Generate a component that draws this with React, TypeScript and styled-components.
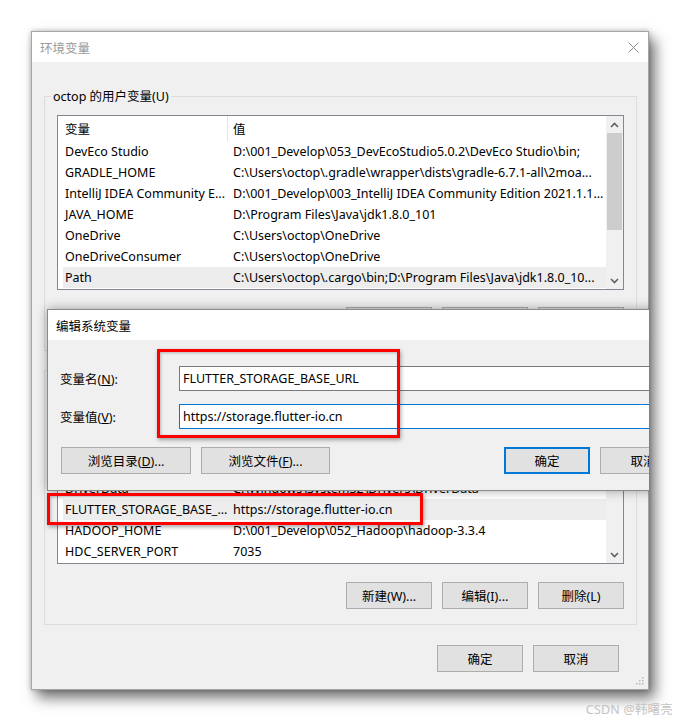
import React from "react";
import styled, { createGlobalStyle } from "styled-components";

const GlobalStyle = createGlobalStyle`
  body {
    margin: 0;
    background: #fff;
    font-family: "Noto Sans", "Noto Sans CJK SC", sans-serif;
    font-size: 12.5px;
    color: #000;
  }
`;

const Desktop = styled.div`
  position: relative;
  width: 681px;
  height: 722px;
  padding: 31px 0 0 31px;
  box-sizing: border-box;
  overflow: hidden;
`;

const Frame = styled.div`
  position: relative;
  width: 618px;
  height: 659px;
  overflow: hidden;
  box-shadow: 6px 8px 13px rgba(0, 0, 0, 0.55), 0 0 5px rgba(0, 0, 0, 0.25);
`;

const Window = styled.div`
  position: relative;
  height: 100%;
  box-sizing: border-box;
  border: 1px solid #a6a6a6;
  background: #f0f0f0;
  display: flex;
  flex-direction: column;
`;

const TitleBar = styled.div<{ $active?: boolean }>`
  flex: none;
  height: 30px;
  background: #fff;
  display: flex;
  align-items: center;
  justify-content: space-between;
  padding: 0 9px 0 8px;
  color: ${(p) => (p.$active ? "#000" : "#9a9a9a")};
`;

const Body = styled.div`
  display: flex;
  flex-direction: column;
  padding: 0 11px 0 12px;
`;

const Group = styled.div<{ $top: number; $bottom: number }>`
  margin-top: ${(p) => p.$top}px;
  border: 1px solid #dcdcdc;
  padding: 0 12px ${(p) => p.$bottom}px;
  display: flex;
  flex-direction: column;
`;

const Caption = styled.div`
  align-self: flex-start;
  margin: -9px 0 0 -6px;
  padding: 0 2px;
  height: 17px;
  line-height: 17px;
  background: #f0f0f0;
`;

const ListBox = styled.div`
  margin-top: 10px;
  height: 175px;
  box-sizing: border-box;
  border: 1px solid #828790;
  background: #fff;
  display: flex;
  overflow: hidden;
`;

const ListMain = styled.div`
  flex: 1;
  min-width: 0;
  display: flex;
  flex-direction: column;
`;

const HeaderRow = styled.div`
  flex: none;
  height: 25px;
  display: grid;
  grid-template-columns: 170px 1fr;
  align-items: stretch;
`;

const HeaderCell = styled.div<{ $divider?: boolean }>`
  display: flex;
  align-items: center;
  padding-left: ${(p) => (p.$divider ? 7 : 5)}px;
  border-right: ${(p) => (p.$divider ? "1px solid #e5e5e5" : "none")};
`;

const Row = styled.div<{ $selected?: boolean }>`
  flex: none;
  height: 21px;
  margin-left: 5px;
  display: grid;
  grid-template-columns: 165px 1fr;
  align-items: center;
  background: ${(p) => (p.$selected ? "#ededed" : "transparent")};
  white-space: nowrap;
`;

const Cell = styled.div<{ $pad: number }>`
  padding-left: ${(p) => p.$pad}px;
  overflow: hidden;
`;

const ScrollBar = styled.div`
  flex: none;
  width: 17px;
  background: #f0f0f0;
  display: flex;
  flex-direction: column;
`;

const ArrowBox = styled.div`
  flex: none;
  height: 17px;
  display: flex;
  align-items: center;
  justify-content: center;
`;

const Track = styled.div`
  flex: 1;
  display: flex;
  flex-direction: column;
`;

const Thumb = styled.div<{ $offset: number; $size: number }>`
  margin: ${(p) => p.$offset}px 1px 0;
  height: ${(p) => p.$size}px;
  background: #cdcdcd;
`;

const ButtonRow = styled.div<{ $top: number; $right?: number }>`
  margin-top: ${(p) => p.$top}px;
  margin-right: ${(p) => p.$right ?? 0}px;
  display: flex;
  justify-content: flex-end;
  gap: 10px;
`;

const Button = styled.button<{ $default?: boolean; $w?: number }>`
  flex: none;
  width: ${(p) => p.$w ?? 86}px;
  height: 27px;
  box-sizing: border-box;
  padding: 0;
  background: #e1e1e1;
  border: ${(p) => (p.$default ? "2px solid #0078d7" : "1px solid #adadad")};
  border-radius: 0;
  font: inherit;
  color: #000;
`;

/* edit dialog floating over the main window */
const Dialog = styled.div`
  position: absolute;
  left: 16px;
  top: 278px;
  width: 652px;
  height: 182px;
  box-sizing: border-box;
  border: 1px solid #8a8a8a;
  background: #f0f0f0;
  display: flex;
  flex-direction: column;
  box-shadow: 0 0 10px rgba(0, 0, 0, 0.35);
`;

const DialogBody = styled.div`
  display: flex;
  flex-direction: column;
  padding: 26px 12px 0;
`;

const Field = styled.div<{ $top?: number }>`
  margin-top: ${(p) => p.$top ?? 0}px;
  display: flex;
  align-items: center;
`;

const FieldLabel = styled.label`
  width: 119px;
  flex: none;
`;

const Input = styled.div<{ $focused?: boolean }>`
  flex: 1;
  height: 25px;
  box-sizing: border-box;
  border: 1px solid ${(p) => (p.$focused ? "#0078d7" : "#7a7a7a")};
  background: #fff;
  display: flex;
  align-items: center;
  padding-left: 3px;
  white-space: nowrap;
`;

const DialogButtons = styled.div`
  margin-top: 18px;
  display: flex;
  gap: 10px;
  padding-left: 1px;
`;

const Spacer = styled.div`
  flex: 1;
`;

const Mark = styled.div<{ $x: number; $y: number; $w: number; $h: number }>`
  position: absolute;
  left: ${(p) => p.$x}px;
  top: ${(p) => p.$y}px;
  width: ${(p) => p.$w}px;
  height: ${(p) => p.$h}px;
  box-sizing: border-box;
  border: 3px solid #ff0000;
  box-shadow: 1px 2px 4px rgba(0, 0, 0, 0.35), inset 1px 1px 3px rgba(0, 0, 0, 0.25);
`;

const Grip = styled.svg`
  position: absolute;
  right: 4px;
  bottom: 4px;
`;

const Watermark = styled.div`
  position: absolute;
  right: 8px;
  top: 699px;
  color: #c4c4c4;
  font-size: 12.5px;
  letter-spacing: 0.2px;
`;

const CloseIcon = () => (
  <svg width="11" height="11" viewBox="0 0 11 11">
    <path d="M0.5 0.5 L10.5 10.5 M10.5 0.5 L0.5 10.5" stroke="#8c8c8c" strokeWidth="1" fill="none" />
  </svg>
);

const Chevron = ({ up }: { up?: boolean }) => (
  <svg width="9" height="6" viewBox="0 0 9 6">
    <path
      d={up ? "M1 5 L4.5 1.5 L8 5" : "M1 1 L4.5 4.5 L8 1"}
      stroke="#606060"
      strokeWidth="1.6"
      fill="none"
    />
  </svg>
);

type EnvVar = { name: string; value: string; selected?: boolean };

const userVars: EnvVar[] = [
  { name: "DevEco Studio", value: "D:\\001_Develop\\053_DevEcoStudio5.0.2\\DevEco Studio\\bin;" },
  { name: "GRADLE_HOME", value: "C:\\Users\\octop\\.gradle\\wrapper\\dists\\gradle-6.7.1-all\\2moa..." },
  { name: "IntelliJ IDEA Community E...", value: "D:\\001_Develop\\003_IntelliJ IDEA Community Edition 2021.1.1..." },
  { name: "JAVA_HOME", value: "D:\\Program Files\\Java\\jdk1.8.0_101" },
  { name: "OneDrive", value: "C:\\Users\\octop\\OneDrive" },
  { name: "OneDriveConsumer", value: "C:\\Users\\octop\\OneDrive" },
  { name: "Path", value: "C:\\Users\\octop\\.cargo\\bin;D:\\Program Files\\Java\\jdk1.8.0_10...", selected: true },
];

const systemVars: EnvVar[] = [
  { name: "ComSpec", value: "C:\\Windows\\system32\\cmd.exe" },
  { name: "DEVECO_SDK_HOME", value: "D:\\001_Develop\\053_DevEcoStudio5.0.2\\sdk" },
  { name: "DOTNET_ROOT", value: "C:\\Program Files\\dotnet" },
  { name: "DriverData", value: "C:\\Windows\\System32\\Drivers\\DriverData" },
  { name: "FLUTTER_STORAGE_BASE_...", value: "https://storage.flutter-io.cn", selected: true },
  { name: "HADOOP_HOME", value: "D:\\001_Develop\\052_Hadoop\\hadoop-3.3.4" },
  { name: "HDC_SERVER_PORT", value: "7035" },
];

const VarList = ({ rows, thumbTop, thumbSize }: { rows: EnvVar[]; thumbTop: number; thumbSize: number }) => (
  <ListBox>
    <ListMain>
      <HeaderRow>
        <HeaderCell $divider>变量</HeaderCell>
        <HeaderCell>值</HeaderCell>
      </HeaderRow>
      {rows.map((r, i) => (
        <Row key={i} $selected={r.selected}>
          <Cell $pad={2}>{r.name}</Cell>
          <Cell $pad={5}>{r.value}</Cell>
        </Row>
      ))}
    </ListMain>
    <ScrollBar>
      <ArrowBox>
        <Chevron up />
      </ArrowBox>
      <Track>
        <Thumb $offset={thumbTop} $size={thumbSize} />
      </Track>
      <ArrowBox>
        <Chevron />
      </ArrowBox>
    </ScrollBar>
  </ListBox>
);

const App: React.FC = () => {
  return (
    <>
      <GlobalStyle />
      <Desktop>
        <Frame>
          <Window>
            <TitleBar>
              <span>环境变量</span>
              <CloseIcon />
            </TitleBar>
            <Body>
              <Group $top={34} $bottom={16}>
                <Caption>octop 的用户变量(U)</Caption>
                <VarList rows={userVars} thumbTop={0} thumbSize={97} />
                <ButtonRow $top={17}>
                  <Button>新建(N)...</Button>
                  <Button>编辑(E)...</Button>
                  <Button>删除(D)</Button>
                </ButtonRow>
              </Group>
              <Group $top={19} $bottom={15}>
                <Caption>系统变量(S)</Caption>
                <VarList rows={systemVars} thumbTop={20} thumbSize={60} />
                <ButtonRow $top={18}>
                  <Button>新建(W)...</Button>
                  <Button>编辑(I)...</Button>
                  <Button>删除(L)</Button>
                </ButtonRow>
              </Group>
              <ButtonRow $top={20} $right={18}>
                <Button>确定</Button>
                <Button>取消</Button>
              </ButtonRow>
            </Body>
            <Grip width="10" height="10" viewBox="0 0 10 10">
              {[
                [8, 2],
                [8, 5],
                [5, 5],
                [8, 8],
                [5, 8],
                [2, 8],
              ].map(([x, y]) => (
                <rect key={`${x}-${y}`} x={x} y={y} width="1.5" height="1.5" fill="#b8b8b8" />
              ))}
            </Grip>
          </Window>

          <Dialog>
            <TitleBar $active>
              <span>编辑系统变量</span>
            </TitleBar>
            <DialogBody>
              <Field>
                <FieldLabel>
                  变量名(<u>N</u>):
                </FieldLabel>
                <Input>FLUTTER_STORAGE_BASE_URL</Input>
              </Field>
              <Field $top={13}>
                <FieldLabel>
                  变量值(<u>V</u>):
                </FieldLabel>
                <Input $focused>https://storage.flutter-io.cn</Input>
              </Field>
              <DialogButtons>
                <Button $w={130}>
                  浏览目录(<u>D</u>)...
                </Button>
                <Button $w={129}>
                  浏览文件(<u>F</u>)...
                </Button>
                <Spacer />
                <Button $default>确定</Button>
                <Button>取消</Button>
              </DialogButtons>
            </DialogBody>
          </Dialog>

          <Mark $x={126} $y={318} $w={243} $h={89} />
          <Mark $x={16} $y={462} $w={376} $h={32} />
        </Frame>
        <Watermark>CSDN @韩曙亮</Watermark>
      </Desktop>
    </>
  );
};

export default App;
